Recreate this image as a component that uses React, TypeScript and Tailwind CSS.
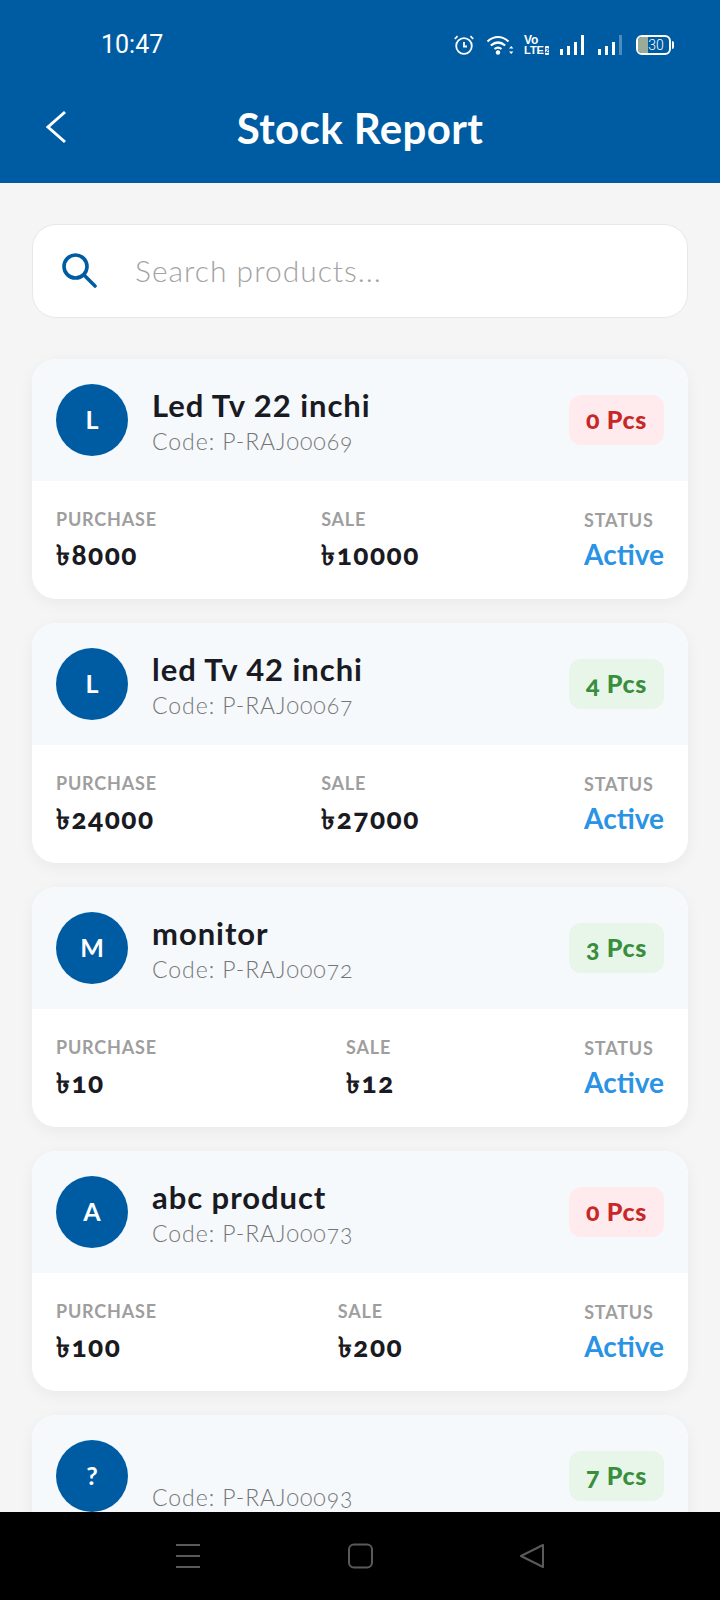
const products = [
  { letter: "L", name: "Led Tv 22 inchi", code: "P-RAJ00069", qty: 0, purchase: "8000", sale: "10000" },
  { letter: "L", name: "led Tv 42 inchi", code: "P-RAJ00067", qty: 4, purchase: "24000", sale: "27000" },
  { letter: "M", name: "monitor", code: "P-RAJ00072", qty: 3, purchase: "10", sale: "12" },
  { letter: "A", name: "abc product", code: "P-RAJ00073", qty: 0, purchase: "100", sale: "200" },
  { letter: "?", name: "", code: "P-RAJ00093", qty: 7 },
]

function StatusIcons() {
  return (
    <div className="flex items-center text-white">
      {/* Alarm */}
      <svg width="22" height="22" viewBox="0 0 22 22" fill="none" stroke="white" strokeWidth="1.8">
        <circle cx="11" cy="12" r="7.8" />
        <path d="M11 8v4.500h3M1.800 5 4.500 2.200M20.200 5 17.500 2.200" />
      </svg>
      {/* Wifi */}
      <svg width="27" height="22" viewBox="0 0 27 22" fill="none" className="ml-[12px]">
        <path d="M0.500 7.500c6.500-6 14.500-6 21 0M3.800 11.500c4.800-4 9.600-4 14.400 0M7.500 15c2.400-2 4.600-2 7 0" stroke="white" strokeWidth="2.200" />
        <circle cx="11" cy="18.500" r="2.200" fill="white" />
        <path d="m22 14.500 2.200-2.400 2.200 2.400zM22 17.500l2.200 2.400 2.200-2.400z" fill="white" />
      </svg>
      {/* VoLTE */}
      <div className="ml-[10px] flex w-[25px] flex-col font-['Liberation_Sans',sans-serif] text-[11px] leading-[10px] font-bold">
        <span className="text-[12px]">Vo</span>
        <span className="flex items-center">
          LTE
          <span className="ml-[1px] h-[9px] w-[6px] rounded-[1px] bg-white text-center text-[7px] leading-[9px] text-[#005ca2]">2</span>
        </span>
      </div>
      {/* Signal 1 */}
      <div className="ml-[11px] flex h-[20px] items-end gap-[4px]">
        <div className="h-[6px] w-[3px] bg-white" />
        <div className="h-[9px] w-[3px] bg-white" />
        <div className="h-[13px] w-[3px] bg-white" />
        <div className="h-[20px] w-[3px] bg-white" />
      </div>
      {/* Signal 2 */}
      <div className="ml-[14px] flex h-[20px] items-end gap-[4px]">
        <div className="h-[6px] w-[3px] bg-white" />
        <div className="h-[9px] w-[3px] bg-white" />
        <div className="h-[13px] w-[3px] bg-white" />
        <div className="h-[20px] w-[3px] bg-white/30" />
      </div>
      {/* Battery */}
      <div className="ml-[14px] flex items-center">
        <div className="relative h-[20px] w-[35px] overflow-hidden rounded-[6px] border-2 border-white">
          <div className="h-full w-[10px] bg-[#9aab97]" />
          <span className="absolute inset-0 pl-[5px] text-center font-['Roboto',sans-serif] text-[14px] leading-[16px] font-light text-white">30</span>
        </div>
        <div className="ml-[1px] h-[8px] w-[2px] rounded-r-sm bg-white" />
      </div>
    </div>
  )
}

function Amount({ label, value }: { label: string; value?: string }) {
  return (
    <div>
      <div className="text-[18px] leading-[22px] font-bold tracking-[0.8px] text-[#9e9e9e]">{label}</div>
      <div className="mt-[9px] text-[28px] leading-[30px] font-black tracking-[1.5px] text-[#1a1a22] [font-feature-settings:'onum']">৳{value}</div>
    </div>
  )
}

function ProductCard({ product }: { product: (typeof products)[number] }) {
  const out = product.qty === 0
  return (
    <div className="shrink-0 overflow-hidden rounded-[24px] bg-white shadow-[0_4px_16px_rgba(0,0,0,0.05)]">
      <div className="flex h-[122px] items-center bg-[#f5f9fc] px-6">
        <div className="flex h-[72px] w-[72px] shrink-0 items-center justify-center rounded-full bg-[#005ca2] text-[25px] font-bold text-white">
          {product.letter}
        </div>
        <div className="ml-[24px] flex-1">
          <div className="h-[36px] text-[31px] leading-[36px] font-bold tracking-[0.95px] text-[#1a1a22]">{product.name}</div>
          <div className="mt-[5px] text-[23px] leading-[26px] font-light tracking-[0.95px] text-[#757575] [font-feature-settings:'onum']">
            Code: {product.code}
          </div>
        </div>
        <div
          className={
            out
              ? "flex h-[50px] w-[95px] items-center justify-center rounded-[12px] bg-[#ffebee] text-[25px] font-black tracking-[0.7px] text-[#c62828] [font-feature-settings:'onum']"
              : "flex h-[50px] w-[95px] items-center justify-center rounded-[12px] bg-[#e8f5e9] text-[25px] font-black tracking-[0.7px] text-[#388e3c] [font-feature-settings:'onum']"
          }
        >
          {product.qty} Pcs
        </div>
      </div>
      {product.purchase && (
        <div className="flex h-[118px] justify-between px-6 pt-[27px]">
          <Amount label="PURCHASE" value={product.purchase} />
          <Amount label="SALE" value={product.sale} />
          <div className="pt-[1px]">
            <div className="text-[18px] leading-[22px] font-bold tracking-[0.8px] text-[#9e9e9e]">STATUS</div>
            <div className="mt-[6px] text-[28px] leading-[34px] font-bold text-[#2a93e6]">Active</div>
          </div>
        </div>
      )}
    </div>
  )
}

export default function App() {
  return (
    <div className="flex h-[1600px] w-[720px] flex-col overflow-hidden bg-[#f5f5f5] font-['Lato','Noto_Sans',sans-serif]">
      <header className="shrink-0 bg-[#005ca2] pt-[28px] text-white">
        <div className="flex h-[34px] items-center justify-between pr-[46px] pl-[101px]">
          <span className="font-['Roboto',sans-serif] text-[25px]">10:47</span>
          <StatusIcons />
        </div>
        <div className="relative flex h-[121px] items-start justify-center pt-[41px]">
          <svg width="22" height="34" viewBox="0 0 22 34" fill="none" stroke="white" strokeWidth="3" className="absolute top-[48px] left-[45px]">
            <path d="M20 2 3 17l17 15" />
          </svg>
          <h1 className="text-[42px] leading-[50px] font-bold tracking-[0.4px]">Stock Report</h1>
        </div>
      </header>

      <main className="flex min-h-0 flex-1 flex-col overflow-hidden px-8 pt-[41px]">
        <div className="flex h-[94px] shrink-0 items-center rounded-[24px] border border-[#e8e8e8] bg-white pb-[2px] pl-[28px]">
          <svg width="36" height="36" viewBox="0 0 36 36" fill="none" stroke="#005ca2" strokeWidth="3.600" strokeLinecap="round">
            <circle cx="14.500" cy="14.500" r="11.500" />
            <path d="M23 23l11 11" />
          </svg>
          <span className="ml-[38px] text-[30px] font-light tracking-[1px] text-[#a3a3a3]">Search products...</span>
        </div>
        <div className="mt-[41px] flex flex-col gap-[24px]">
          {products.map((p) => (
            <ProductCard key={p.code} product={p} />
          ))}
        </div>
      </main>

      <nav className="flex h-[88px] shrink-0 items-center bg-black">
        <svg width="720" height="88" viewBox="0 0 720 88" fill="none" stroke="#5a5a5a" strokeWidth="2" strokeLinejoin="round">
          <path d="M176 33h24M176 44h24M176 55h24" />
          <rect x="349" y="32.500" width="23" height="23" rx="5" />
          <path d="M543 33 521 44l22 11z" />
        </svg>
      </nav>
    </div>
  )
}
